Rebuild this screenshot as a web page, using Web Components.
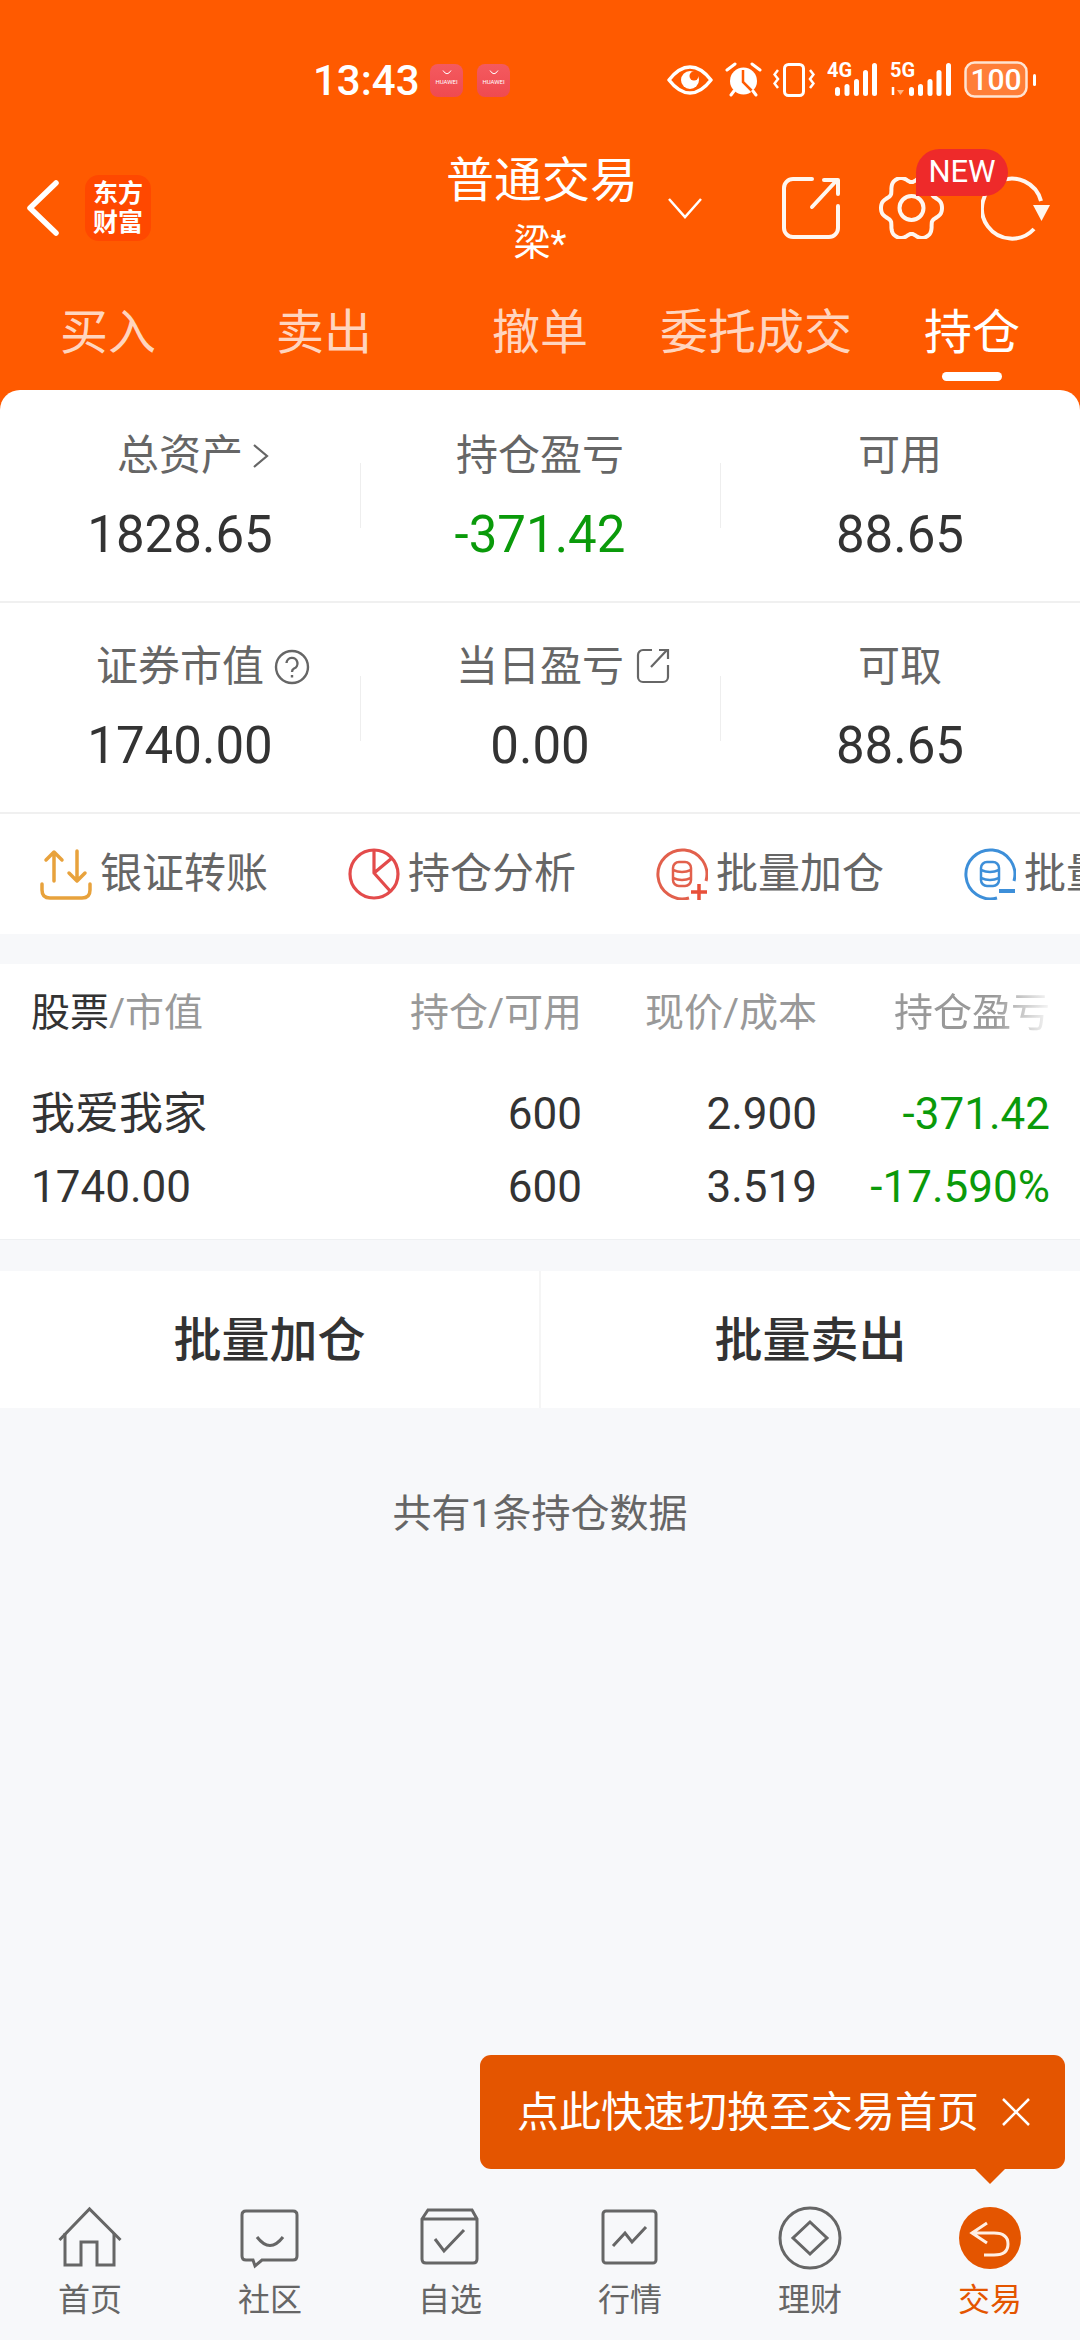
<!DOCTYPE html>
<html lang="zh">
<head>
<meta charset="utf-8">
<title>持仓</title>
<style>
  html, body { margin: 0; padding: 0; }
  body {
    width: 1080px;
    height: 2340px;
    overflow: hidden;
    background: #f7f8fa;
    font-family: Roboto, "Noto Sans CJK SC", sans-serif;
    color: #333;
  }
  #app {
    position: relative;
    display: flex;
    flex-direction: column;
    height: 2340px;
  }
</style>
</head>
<body>
<div id="app">
  <trade-header></trade-header>
  <stat-panel>
    <stat-row>
      <stat-cell label="总资产" value="1828.65" icon="chevron"></stat-cell>
      <stat-cell label="持仓盈亏" value="-371.42" tone="down"></stat-cell>
      <stat-cell label="可用" value="88.65"></stat-cell>
    </stat-row>
    <stat-row>
      <stat-cell label="证券市值" value="1740.00" icon="help"></stat-cell>
      <stat-cell label="当日盈亏" value="0.00" icon="share"></stat-cell>
      <stat-cell label="可取" value="88.65"></stat-cell>
    </stat-row>
  </stat-panel>
  <action-strip>
    <action-item icon="transfer">银证转账</action-item>
    <action-item icon="pie">持仓分析</action-item>
    <action-item icon="add">批量加仓</action-item>
    <action-item icon="minus">批量卖出</action-item>
  </action-strip>
  <stock-table></stock-table>
  <batch-actions></batch-actions>
  <summary-note>共有1条持仓数据</summary-note>
  <tab-bar></tab-bar>
  <tip-bubble>点此快速切换至交易首页</tip-bubble>
</div>

<script>
const FONT = `Roboto, "Noto Sans CJK SC", sans-serif`;

class StatusBar extends HTMLElement {
  constructor() {
    super();
    this.attachShadow({ mode: "open" });
  }

  static get styles() {
    return /* css */`
      :host {
        display: flex;
        align-items: flex-start;
        height: 145px;
        box-sizing: border-box;
        padding: 62px 44px 0 313px;
        color: #fff;
        font-family: ${FONT};
      }

      .time {
        font-size: 42px;
        font-weight: 500;
        line-height: 38px;
        width: 117px;
      }

      .tile {
        display: flex;
        flex-direction: column;
        align-items: center;
        width: 33px;
        height: 33px;
        margin: 2px 14px 0 0;
        border-radius: 8px;
        background: linear-gradient(#f45a5f, #ef4a50);
        font-size: 6px;
        line-height: 8px;
      }

      .tile svg {
        display: block;
        margin-top: 6px;
        margin-bottom: 3px;
      }

      .icons {
        display: flex;
        align-items: flex-start;
        margin-left: auto;
      }

      .icons svg { display: block; flex: none; }
      .bars { margin-top: -3px; }
      .bars rect { fill: #fff; }
      text { fill: #fff; font-family: ${FONT}; }
    `;
  }

  signalBars(xs, heights) {
    return xs.map((x, i) => `<rect x="${x}" y="${34 - heights[i]}" width="5" height="${heights[i]}" rx="2.5"/>`).join("");
  }

  connectedCallback() {
    const tile = `<div class="tile"><svg width="10" height="5" viewBox="0 0 10 5"><path d="M1 0.5Q5 7 9 0.5" fill="none" stroke="#fff"/></svg>HUAWEI</div>`;
    this.shadowRoot.innerHTML = /* html */`
    <style>${StatusBar.styles}</style>
    <div class="time">13:43</div>
    ${tile}${tile}
    <div class="icons">
      <svg width="46" height="34" viewBox="0 0 46 34" style="margin:3px 12px 0 0">
        <path d="M2 15Q12 2 23 2T44 15Q34 28 23 28T2 15Z" fill="none" stroke="#fff" stroke-width="3.5" stroke-linejoin="round"/>
        <circle cx="23" cy="15" r="9" fill="#fff"/>
        <circle cx="27" cy="11" r="4.5" fill="#ff5a00"/>
      </svg>
      <svg width="37" height="35" viewBox="0 0 37 35" style="margin:0 11px 0 0">
        <circle cx="18.5" cy="19" r="13.5" fill="#fff"/>
        <path d="M18 8V20L27 29" fill="none" stroke="#ff5a00" stroke-width="2.5"/>
        <path d="M2 8L10 2M27 2L35 8M6 33L9 29M31 33L28 29" stroke="#fff" stroke-width="3" stroke-linecap="round"/>
      </svg>
      <svg width="42" height="35" viewBox="0 0 42 35" fill="none" stroke="#fff" style="margin:1px 12px 0 0">
        <rect x="11.5" y="1.5" width="19" height="31" rx="4" stroke-width="3"/>
        <path d="M5 7L1.5 11.500L5 16L1.500 20.500L5 25M37 7L40.500 11.500L37 16L40.500 20.500L37 25" stroke-width="2.500"/>
      </svg>
      <svg class="bars" width="50" height="38" viewBox="0 -3 50 38" style="margin-right:13px">
        <text x="0" y="15" font-size="20" font-weight="700">4G</text>
        ${this.signalBars([8, 17.5, 27, 36, 45], [9, 12, 17, 26, 33])}
      </svg>
      <svg class="bars" width="61" height="38" viewBox="0 -3 61 38" style="margin-right:13px">
        <text x="0" y="15" font-size="20" font-weight="700">5G</text>
        <path d="M3 33V25" stroke="#fff" stroke-width="2.500"/>
        <path d="M7 28H14L10.500 33Z" fill="#ffb27f"/>
        ${this.signalBars([19, 28, 37.5, 46.5, 56], [9, 12, 17, 26, 33])}
      </svg>
      <svg width="72" height="38" viewBox="0 0 72 38" style="margin-top:-1px">
        <rect x="1.500" y="1.500" width="61" height="34" rx="9" fill="rgba(255,255,255,.22)" stroke="#ffe3d1" stroke-width="2.500"/>
        <text x="32" y="29" font-size="30" font-weight="500" text-anchor="middle">100</text>
        <rect x="69" y="13" width="3" height="12" rx="1.500" fill="#fff"/>
      </svg>
    </div>`;
  }
}

class TradeNav extends HTMLElement {
  constructor() {
    super();
    this.attachShadow({ mode: "open" });
  }

  static get styles() {
    return /* css */`
      :host {
        display: grid;
        grid-template-columns: 446px 188px 1fr;
        height: 126px;
        color: #fff;
        font-family: ${FONT};
      }

      .lead {
        display: flex;
        align-items: center;
        padding-left: 27px;
      }

      .logo {
        width: 66px;
        height: 66px;
        margin-left: 26px;
        border-radius: 14px;
        background: #ff4800;
        font-size: 25px;
        font-weight: 700;
        line-height: 29px;
        text-align: center;
        padding-top: 4px;
        box-sizing: border-box;
      }

      .title {
        text-align: center;
        white-space: nowrap;
        padding-top: 10px;
      }

      .name {
        font-size: 48px;
        line-height: 52px;
      }

      .sub {
        font-size: 37px;
        line-height: 40px;
        margin-top: 17px;
      }

      .tools {
        display: flex;
        align-items: center;
        padding-left: 33px;
      }

      svg { display: block; flex: none; fill: none; }

      .open { margin-left: 79px; }
      .gear-wrap {
        position: relative;
        margin-left: 39px;
        width: 65px;
        height: 62px;
      }
      .reload { margin-left: 37px; }

      .badge {
        position: absolute;
        left: 37px;
        top: -28px;
        width: 92px;
        height: 47px;
        border-radius: 24px 24px 24px 0;
        background: #ee2a2a;
        font-size: 31px;
        line-height: 46px;
        text-align: center;
      }
    `;
  }

  gearPath() {
    const pts = [];
    for (let i = 0; i < 120; i++) {
      const a = i / 120 * Math.PI * 2;
      const r = 30.5 - 6.5 * Math.pow(Math.abs(Math.sin(3 * a)), 3);
      pts.push(`${(32.5 + r * Math.cos(a)).toFixed(1)} ${(31 + r * 1.08 * Math.sin(a)).toFixed(1)}`);
    }
    return "M" + pts.join("L") + "Z";
  }

  connectedCallback() {
    this.shadowRoot.innerHTML = /* html */`
    <style>${TradeNav.styles}</style>
    <div class="lead">
      <svg width="32" height="56" viewBox="0 0 32 56">
        <path d="M29 3L3 28L29 53" stroke="#fff" stroke-width="5.500" stroke-linecap="round" stroke-linejoin="round"/>
      </svg>
      <div class="logo">东方<br>财富</div>
    </div>
    <div class="title">
      <div class="name">普通交易</div>
      <div class="sub">梁*</div>
    </div>
    <div class="tools">
      <svg width="36" height="22" viewBox="0 0 36 22">
        <path d="M2 2L18 20L34 2" stroke="#fff" stroke-width="2.500"/>
      </svg>
      <svg class="open" width="58" height="62" viewBox="0 0 58 62" stroke="#fff6ef" stroke-width="4" stroke-linecap="round" stroke-linejoin="round">
        <path d="M30 2H11A9 9 0 0 0 2 11V51A9 9 0 0 0 11 60H47A9 9 0 0 0 56 51V29"/>
        <path d="M30 30L55 3M42 3H56V17"/>
      </svg>
      <div class="gear-wrap">
        <svg width="65" height="62" viewBox="0 0 65 62" stroke="#fff6ef" stroke-width="4" stroke-linejoin="round">
          <path d="${this.gearPath()}"/>
          <circle cx="32.500" cy="31" r="12"/>
        </svg>
        <div class="badge">NEW</div>
      </div>
      <svg class="reload" width="70" height="66" viewBox="0 0 70 66" stroke="#fff6ef" stroke-width="4">
        <path d="M60 26A30 30 0 1 0 53 54"/>
        <path d="M52 30H69L60.500 46Z" fill="#fff6ef" stroke="none"/>
      </svg>
    </div>`;
  }
}

class TradeTabs extends HTMLElement {
  constructor() {
    super();
    this.attachShadow({ mode: "open" });
  }

  static get styles() {
    return /* css */`
      :host {
        display: grid;
        grid-template-columns: repeat(5, 1fr);
        height: 119px;
        font-family: ${FONT};
      }

      .tab {
        display: flex;
        flex-direction: column;
        align-items: center;
        padding-top: 34px;
        font-size: 48px;
        line-height: 56px;
        color: rgba(255, 255, 255, 0.76);
        white-space: nowrap;
      }

      .tab.active { color: #fff; }

      .tab.active::after {
        content: "";
        width: 60px;
        height: 9px;
        margin-top: 11px;
        border-radius: 5px;
        background: #fff;
      }
    `;
  }

  connectedCallback() {
    const tabs = ["买入", "卖出", "撤单", "委托成交", "持仓"];
    this.shadowRoot.innerHTML = /* html */`
    <style>${TradeTabs.styles}</style>
    ${tabs.map((t, i) => `<div class="tab ${i === 4 ? "active" : ""}">${t}</div>`).join("")}`;
  }
}

class TradeHeader extends HTMLElement {
  constructor() {
    super();
    this.attachShadow({ mode: "open" });
  }

  connectedCallback() {
    this.shadowRoot.innerHTML = /* html */`
    <style>
      :host {
        display: block;
        height: 410px;
        background: #ff5a00;
      }
    </style>
    <status-bar></status-bar>
    <trade-nav></trade-nav>
    <trade-tabs></trade-tabs>`;
  }
}

class StatPanel extends HTMLElement {
  constructor() {
    super();
    this.attachShadow({ mode: "open" });
    this.shadowRoot.innerHTML = /* html */`
    <style>
      :host {
        display: block;
        margin-top: -20px;
        border-radius: 20px 20px 0 0;
        background: #fff;
        overflow: hidden;
      }
    </style>
    <slot></slot>`;
  }
}

class StatRow extends HTMLElement {
  constructor() {
    super();
    this.attachShadow({ mode: "open" });
  }

  connectedCallback() {
    this.shadowRoot.innerHTML = /* html */`
    <style>
      :host {
        display: flex;
        height: 211px;
        border-bottom: 2px solid #f0f0f0;
      }
      :host(:last-child) { height: 209px; }
      ::slotted(stat-cell) { flex: 1 1 0; padding-top: 39px; }
      :host(:last-child) ::slotted(stat-cell) { padding-top: 37px; }
    </style>
    <slot></slot>`;
  }
}

class StatCell extends HTMLElement {
  constructor() {
    super();
    this.attachShadow({ mode: "open" });
  }

  static get styles() {
    return /* css */`
      :host {
        display: block;
        text-align: center;
        font-family: ${FONT};
        background: linear-gradient(#eee, #eee) left 73px / 1px 65px no-repeat;
      }

      :host(:first-child) { background: none; }

      .label {
        display: flex;
        justify-content: center;
        align-items: center;
        font-size: 42px;
        line-height: 54px;
        color: #666;
      }

      .label svg { flex: none; display: block; }

      .value {
        font-size: 51px;
        line-height: 60px;
        margin-top: 22px;
        color: #333;
      }

      .down { color: #0a9a0a; }
    `;
  }

  icon(name) {
    if (name === "chevron") {
      return `<svg width="20" height="28" viewBox="0 0 20 28" style="margin:0 -28px 0 8px" fill="none" stroke="#666" stroke-width="2.200"><path d="M3 3L16 14L3 25"/></svg>`;
    }
    if (name === "help") {
      return `<svg width="36" height="36" viewBox="0 0 36 36" style="margin:0 -46px 0 10px" fill="none" stroke="#666" stroke-width="2.400"><circle cx="18" cy="18" r="16"/><path d="M12.500 14A5.500 5.500 0 1 1 20 19.500Q18 20.500 18 23"/><path d="M18 26V28.500"/></svg>`;
    }
    if (name === "share") {
      return `<svg width="34" height="36" viewBox="0 0 34 36" style="margin:-2px -46px 0 12px" fill="none" stroke="#666" stroke-width="2.200"><path d="M16 2H7A5 5 0 0 0 2 7V29A5 5 0 0 0 7 34H27A5 5 0 0 0 32 29V17"/><path d="M15 19L31 2M23 2H32V11"/></svg>`;
    }
    return "";
  }

  connectedCallback() {
    const tone = this.getAttribute("tone") === "down" ? "down" : "";
    this.shadowRoot.innerHTML = /* html */`
    <style>${StatCell.styles}</style>
    <div class="label">${this.getAttribute("label")}${this.icon(this.getAttribute("icon"))}</div>
    <div class="value ${tone}">${this.getAttribute("value")}</div>`;
  }
}

class ActionStrip extends HTMLElement {
  constructor() {
    super();
    this.attachShadow({ mode: "open" });
    this.shadowRoot.innerHTML = /* html */`
    <style>
      :host {
        display: flex;
        align-items: center;
        gap: 81px;
        height: 120px;
        padding-left: 40px;
        overflow: hidden;
        background: #fff;
      }
    </style>
    <slot></slot>`;
  }
}

class ActionItem extends HTMLElement {
  constructor() {
    super();
    this.attachShadow({ mode: "open" });
  }

  static get styles() {
    return /* css */`
      :host {
        display: flex;
        flex: none;
        align-items: center;
        gap: 8px;
        width: 227px;
        font-family: ${FONT};
        font-size: 42px;
        line-height: 56px;
        color: #666;
        white-space: nowrap;
      }

      svg { display: block; flex: none; fill: none; }
    `;
  }

  database(color) {
    return `<g stroke="${color}" stroke-width="2.500"><rect x="17" y="14" width="18" height="24" rx="6"/><path d="M17 22Q26 26 35 22M17 30Q26 34 35 30"/></g>`;
  }

  icon(name) {
    if (name === "transfer") {
      return `<g stroke="#e8a23c" stroke-width="3.500" stroke-linecap="round" stroke-linejoin="round"><path d="M2 36V42Q2 50 10 50H42Q50 50 50 42V36"/><path d="M14 33V5M6 12L14 4L22 12"/><path d="M37 3V32M29 25L37 33L45 25"/></g>`;
    }
    if (name === "pie") {
      return `<g stroke="#e34b4b" stroke-width="3.200" stroke-linejoin="round"><circle cx="26" cy="26" r="24"/><path d="M26 2V25L44 10M26 25L43 44"/></g>`;
    }
    if (name === "add") {
      return `<path d="M50 33A24.500 24.500 0 1 0 33 50" stroke="#e2604c" stroke-width="3"/>${this.database("#e2604c")}<path d="M43 36V52M35 44H51" stroke="#e8503a" stroke-width="3.500"/>`;
    }
    return `<path d="M50 33A24.500 24.500 0 1 0 33 50" stroke="#3d8fd9" stroke-width="3"/>${this.database("#3d8fd9")}<path d="M35 43H51" stroke="#3d8fd9" stroke-width="4"/>`;
  }

  connectedCallback() {
    this.shadowRoot.innerHTML = /* html */`
    <style>${ActionItem.styles}</style>
    <svg width="52" height="52" viewBox="0 0 52 52">${this.icon(this.getAttribute("icon"))}</svg>
    <slot></slot>`;
  }
}

class StockTable extends HTMLElement {
  constructor() {
    super();
    this.attachShadow({ mode: "open" });
  }

  static get styles() {
    return /* css */`
      :host {
        display: grid;
        grid-template-columns: 1fr 235px 235px 233px;
        margin-top: 30px;
        padding: 25px 30px 23px 31px;
        height: 276px;
        box-sizing: border-box;
        background: #fff;
        border-bottom: 1px solid #eef0f2;
        font-family: ${FONT};
        font-size: 44px;
        line-height: 60px;
        color: #333;
        white-space: nowrap;
      }

      .head {
        font-size: 39px;
        line-height: 48px;
        margin-bottom: 47px;
        color: #999;
        text-align: right;
      }

      .first { text-align: left; }
      .first b { font-weight: 400; color: #333; }
      .row { text-align: right; }
      .row.first { text-align: left; }
      .second { margin-top: 13px; }
      .down { color: #0a9a0a; }

      .fade {
        -webkit-mask-image: linear-gradient(to right, #000 0, #000 calc(100% - 56px), rgba(0, 0, 0, 0.08) 100%);
        mask-image: linear-gradient(to right, #000 0, #000 calc(100% - 56px), rgba(0, 0, 0, 0.08) 100%);
      }
    `;
  }

  connectedCallback() {
    this.shadowRoot.innerHTML = /* html */`
    <style>${StockTable.styles}</style>
    <div class="head first"><b>股票</b>/市值</div>
    <div class="head">持仓/可用</div>
    <div class="head">现价/成本</div>
    <div class="head fade">持仓盈亏</div>
    <div class="row first">我爱我家</div>
    <div class="row">600</div>
    <div class="row">2.900</div>
    <div class="row down">-371.42</div>
    <div class="row first second">1740.00</div>
    <div class="row second">600</div>
    <div class="row second">3.519</div>
    <div class="row second down">-17.590%</div>`;
  }
}

class BatchActions extends HTMLElement {
  constructor() {
    super();
    this.attachShadow({ mode: "open" });
  }

  connectedCallback() {
    this.shadowRoot.innerHTML = /* html */`
    <style>
      :host {
        display: grid;
        grid-template-columns: 1fr 2px 1fr;
        align-items: center;
        height: 137px;
        margin-top: 31px;
        background: #fff;
        font-family: ${FONT};
        font-size: 48px;
        font-weight: 500;
        color: #333;
        text-align: center;
      }
      .cell { padding-bottom: 8px; }
      .line { height: 100%; background: #f5f5f5; }
    </style>
    <div class="cell">批量加仓</div>
    <div class="line"></div>
    <div class="cell">批量卖出</div>`;
  }
}

class SummaryNote extends HTMLElement {
  constructor() {
    super();
    this.attachShadow({ mode: "open" });
    this.shadowRoot.innerHTML = /* html */`
    <style>
      :host {
        display: block;
        padding-top: 76px;
        font-family: ${FONT};
        font-size: 39px;
        line-height: 60px;
        color: #666;
        text-align: center;
      }
    </style>
    <slot></slot>`;
  }
}

class TabBar extends HTMLElement {
  constructor() {
    super();
    this.attachShadow({ mode: "open" });
  }

  static get styles() {
    return /* css */`
      :host {
        display: grid;
        grid-template-columns: repeat(6, 1fr);
        margin-top: auto;
        height: 150px;
        box-sizing: border-box;
        padding-top: 16px;
        font-family: ${FONT};
      }

      .item {
        display: flex;
        flex-direction: column;
        align-items: center;
        font-size: 32px;
        line-height: 40px;
        color: #666;
      }

      .item span { margin-top: 10px; }
      .item.active { color: #e45500; }
      svg { display: block; fill: none; stroke: #666; stroke-width: 3; }
    `;
  }

  connectedCallback() {
    const items = [
      ["首页", `<path d="M1.500 34L31.500 3L62.500 34"/><path d="M7 27V59H23V36H39V59H56V27"/>`],
      ["社区", `<path d="M8 5H55Q59 5 59 9V50Q59 54 55 54H24L17 60L15 54H8Q4 54 4 50V9Q4 5 8 5Z"/><path d="M19 31Q32 48 45 31"/>`],
      ["自选", `<path d="M4 13L10 4H54L59 13V53Q59 57 55 57H8Q4 57 4 53ZM4 13H59"/><path d="M17 33L26 45L46 24"/>`],
      ["行情", `<rect x="5" y="5" width="53" height="52" rx="3"/><path d="M15 40L27 27L34 36L48 21"/>`],
      ["理财", `<circle cx="32" cy="32" r="30"/><path d="M32 16L49 32L32 48L15 32Z"/>`],
      ["交易", `<circle cx="32" cy="32" r="31" fill="#e45500" stroke="none"/><path d="M29 17L14 27L29 37M14 27H36Q50 27 50 38Q50 49 36 49H26" stroke="#ffefe4"/>`]
    ];
    this.shadowRoot.innerHTML = /* html */`
    <style>${TabBar.styles}</style>
    ${items.map(([label, icon], i) => `
      <div class="item ${i === 5 ? "active" : ""}">
        <svg width="64" height="64" viewBox="0 0 64 64">${icon}</svg>
        <span>${label}</span>
      </div>`).join("")}`;
  }
}

class TipBubble extends HTMLElement {
  constructor() {
    super();
    this.attachShadow({ mode: "open" });
  }

  static get styles() {
    return /* css */`
      :host {
        position: absolute;
        left: 480px;
        top: 2055px;
        display: flex;
        align-items: center;
        width: 585px;
        height: 114px;
        box-sizing: border-box;
        padding: 0 0 8px 37px;
        border-radius: 11px;
        background: #e45500;
        color: #fff;
        font-family: ${FONT};
        font-size: 42px;
        white-space: nowrap;
      }

      :host::after {
        content: "";
        position: absolute;
        left: 495px;
        top: 114px;
        border: 15px solid transparent;
        border-top-color: #e45500;
        border-bottom: 0;
      }

      svg { display: block; margin: 8px 0 0 22px; flex: none; }
    `;
  }

  connectedCallback() {
    this.shadowRoot.innerHTML = /* html */`
    <style>${TipBubble.styles}</style>
    <slot></slot>
    <svg width="30" height="30" viewBox="0 0 30 30"><path d="M2 2L28 28M28 2L2 28" stroke="#fff" stroke-width="2.500"/></svg>`;
  }
}

customElements.define("status-bar", StatusBar);
customElements.define("trade-nav", TradeNav);
customElements.define("trade-tabs", TradeTabs);
customElements.define("trade-header", TradeHeader);
customElements.define("stat-panel", StatPanel);
customElements.define("stat-row", StatRow);
customElements.define("stat-cell", StatCell);
customElements.define("action-strip", ActionStrip);
customElements.define("action-item", ActionItem);
customElements.define("stock-table", StockTable);
customElements.define("batch-actions", BatchActions);
customElements.define("summary-note", SummaryNote);
customElements.define("tab-bar", TabBar);
customElements.define("tip-bubble", TipBubble);
</script>
</body>
</html>
